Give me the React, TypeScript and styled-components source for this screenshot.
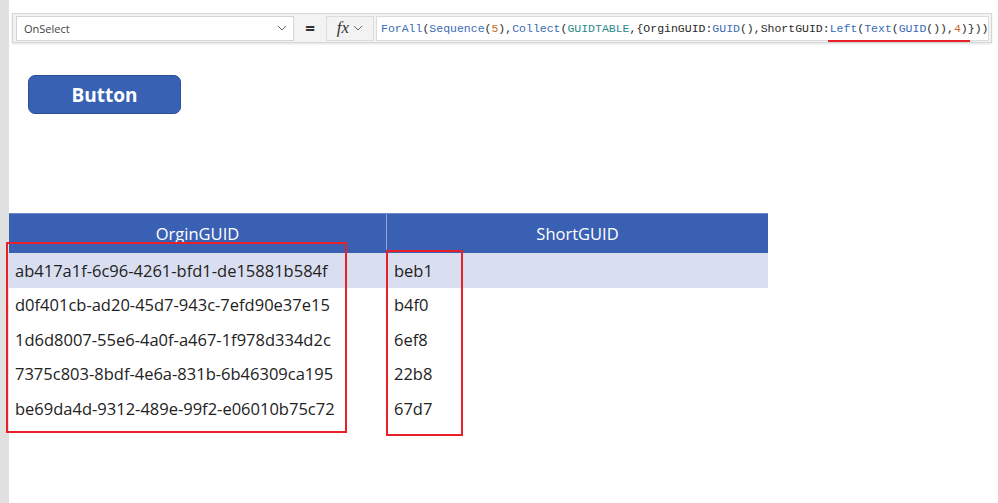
import styled, { createGlobalStyle } from "styled-components";

const GlobalStyle = createGlobalStyle`
  html, body {
    margin: 0;
    padding: 0;
    background: #ffffff;
  }
  body {
    font-family: "Open Sans", "Liberation Sans", sans-serif;
  }
`;

const Page = styled.div`
  display: flex;
  width: 998px;
  height: 503px;
  overflow: hidden;
  background: #ffffff;
`;

const SideStrip = styled.div`
  width: 9px;
  flex-shrink: 0;
  background: #e1e1e1;
`;

const Canvas = styled.div`
  position: relative;
  flex: 1;
  display: flex;
  flex-direction: column;
`;

const FormulaBar = styled.div`
  margin: 13px 6px 0 3px;
  height: 30px;
  display: flex;
  align-items: center;
  padding: 0 2px 0 3px;
  background: #f3f3f3;
  border: 1px solid #d6d6d6;
  box-shadow: 0 1px 2px rgba(0, 0, 0, 0.12);
  box-sizing: border-box;
`;

const PropertySelect = styled.div`
  width: 278px;
  height: 25px;
  box-sizing: border-box;
  display: flex;
  align-items: center;
  justify-content: space-between;
  padding: 0 6px 0 7px;
  background: #ffffff;
  border: 1px solid #d4d4d4;
  font-size: 11px;
  color: #444;
`;

const Equals = styled.div`
  width: 32px;
  text-align: center;
  font-size: 17px;
  font-weight: 700;
  color: #333;
  line-height: 1;
`;

const FxButton = styled.div`
  width: 48px;
  height: 25px;
  box-sizing: border-box;
  display: flex;
  align-items: center;
  justify-content: center;
  gap: 4px;
  border: 1px solid #dcdcdc;
  background: #f3f3f3;
  font-family: "Liberation Serif", serif;
  font-style: italic;
  font-size: 17px;
  color: #333;
`;

const FormulaInput = styled.div`
  flex: 1;
  height: 25px;
  box-sizing: border-box;
  margin-left: 2px;
  display: flex;
  align-items: center;
  padding-left: 4px;
  background: #ffffff;
  border: 1px solid #dcdcdc;
  font-family: "Liberation Mono", "DejaVu Sans Mono", monospace;
  font-size: 11.5px;
  color: #2a2a2a;
  white-space: pre;
`;

const Tok = styled.span<{ $kind: "fn" | "num" | "tbl" }>`
  color: ${(p) =>
    p.$kind === "fn" ? "#3a6bb5" : p.$kind === "num" ? "#c4692c" : "#2c8a8c"};
`;

const Squiggle = styled.span`
  position: relative;
  &::after {
    content: "";
    position: absolute;
    left: -2px;
    right: -2px;
    bottom: -7px;
    height: 2px;
    background: #e8202a;
  }
`;

const ButtonRow = styled.div`
  padding: 32px 0 0 19px;
`;

const AppButton = styled.button`
  width: 153px;
  height: 39px;
  border-radius: 7px;
  border: 1px solid #2c4f98;
  background: #3961b3;
  color: #ffffff;
  font-family: "Open Sans", sans-serif;
  font-weight: 700;
  font-size: 19px;
  padding: 0;
`;

const Table = styled.div`
  margin-top: 99px;
  width: 759px;
  display: flex;
  flex-direction: column;
`;

const HeaderRow = styled.div`
  display: grid;
  grid-template-columns: 378px 1fr;
  height: 40px;
  background: #3960b3;
  border-top: 1px solid #6d88c6;
  box-sizing: border-box;
`;

const HeaderCell = styled.div<{ $divider?: boolean }>`
  display: flex;
  align-items: center;
  justify-content: center;
  color: #ffffff;
  font-size: 16.5px;
  border-right: ${(p) => (p.$divider ? "1px solid #8ea4d6" : "none")};
`;

const Row = styled.div<{ $selected?: boolean }>`
  display: grid;
  grid-template-columns: 378px 1fr;
  height: 34.5px;
  align-items: center;
  background: ${(p) => (p.$selected ? "#d9dff0" : "#ffffff")};
  color: #222;
  font-size: 16.5px;
`;

const Cell = styled.div<{ $indent: number }>`
  padding-left: ${(p) => p.$indent}px;
`;

const Annotation = styled.div<{
  $x: number;
  $y: number;
  $w: number;
  $h: number;
}>`
  position: absolute;
  left: ${(p) => p.$x}px;
  top: ${(p) => p.$y}px;
  width: ${(p) => p.$w}px;
  height: ${(p) => p.$h}px;
  border: 2px solid #e8202a;
  box-sizing: border-box;
  pointer-events: none;
`;

const Chevron = () => (
  <svg width="10" height="6" viewBox="0 0 10 6" fill="none">
    <path d="M1 1l4 4 4-4" stroke="#666" strokeWidth="1" />
  </svg>
);

const rows = [
  ["ab417a1f-6c96-4261-bfd1-de15881b584f", "beb1"],
  ["d0f401cb-ad20-45d7-943c-7efd90e37e15", "b4f0"],
  ["1d6d8007-55e6-4a0f-a467-1f978d334d2c", "6ef8"],
  ["7375c803-8bdf-4e6a-831b-6b46309ca195", "22b8"],
  ["be69da4d-9312-489e-99f2-e06010b75c72", "67d7"],
];

export default function App() {
  return (
    <>
      <GlobalStyle />
      <Page>
        <SideStrip />
        <Canvas>
          <FormulaBar>
            <PropertySelect>
              <span>OnSelect</span>
              <Chevron />
            </PropertySelect>
            <Equals>=</Equals>
            <FxButton>
              fx
              <Chevron />
            </FxButton>
            <FormulaInput>
              <Tok $kind="fn">ForAll</Tok>(<Tok $kind="fn">Sequence</Tok>(
              <Tok $kind="num">5</Tok>),<Tok $kind="fn">Collect</Tok>(
              <Tok $kind="tbl">GUIDTABLE</Tok>,{"{"}OrginGUID:
              <Tok $kind="fn">GUID</Tok>(),ShortGUID:
              <Squiggle>
                <Tok $kind="fn">Left</Tok>(<Tok $kind="fn">Text</Tok>(
                <Tok $kind="fn">GUID</Tok>()),<Tok $kind="num">4</Tok>)
              </Squiggle>
              {"}"}))
            </FormulaInput>
          </FormulaBar>
          <ButtonRow>
            <AppButton>Button</AppButton>
          </ButtonRow>
          <Table>
            <HeaderRow>
              <HeaderCell $divider>OrginGUID</HeaderCell>
              <HeaderCell>ShortGUID</HeaderCell>
            </HeaderRow>
            {rows.map(([origin, short], i) => (
              <Row key={origin} $selected={i === 0}>
                <Cell $indent={6}>{origin}</Cell>
                <Cell $indent={7}>{short}</Cell>
              </Row>
            ))}
          </Table>
          <Annotation $x={-3} $y={242} $w={341} $h={191} />
          <Annotation $x={377} $y={250} $w={77} $h={186} />
        </Canvas>
      </Page>
    </>
  );
}
